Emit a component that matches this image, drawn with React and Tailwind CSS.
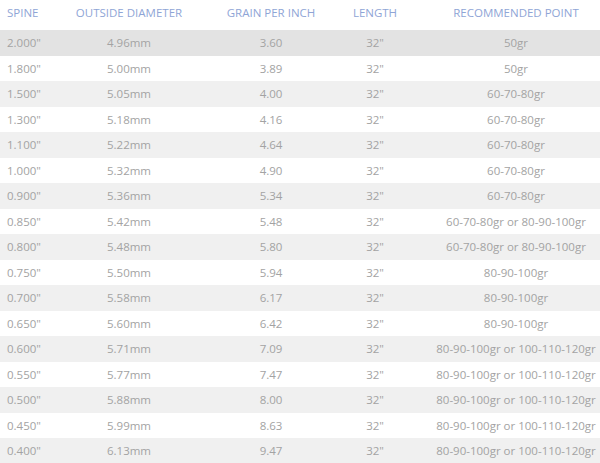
import React from "react";

const rows = [
    ["2.000\"", "4.96mm", "3.60", "32\"", "50gr"],
    ["1.800\"", "5.00mm", "3.89", "32\"", "50gr"],
    ["1.500\"", "5.05mm", "4.00", "32\"", "60-70-80gr"],
    ["1.300\"", "5.18mm", "4.16", "32\"", "60-70-80gr"],
    ["1.100\"", "5.22mm", "4.64", "32\"", "60-70-80gr"],
    ["1.000\"", "5.32mm", "4.90", "32\"", "60-70-80gr"],
    ["0.900\"", "5.36mm", "5.34", "32\"", "60-70-80gr"],
    ["0.850\"", "5.42mm", "5.48", "32\"", "60-70-80gr or 80-90-100gr"],
    ["0.800\"", "5.48mm", "5.80", "32\"", "60-70-80gr or 80-90-100gr"],
    ["0.750\"", "5.50mm", "5.94", "32\"", "80-90-100gr"],
    ["0.700\"", "5.58mm", "6.17", "32\"", "80-90-100gr"],
    ["0.650\"", "5.60mm", "6.42", "32\"", "80-90-100gr"],
    ["0.600\"", "5.71mm", "7.09", "32\"", "80-90-100gr or 100-110-120gr"],
    ["0.550\"", "5.77mm", "7.47", "32\"", "80-90-100gr or 100-110-120gr"],
    ["0.500\"", "5.88mm", "8.00", "32\"", "80-90-100gr or 100-110-120gr"],
    ["0.450\"", "5.99mm", "8.63", "32\"", "80-90-100gr or 100-110-120gr"],
    ["0.400\"", "6.13mm", "9.47", "32\"", "80-90-100gr or 100-110-120gr"],
];

const cols = "grid grid-cols-[60px_138px_146px_62px_194px]";

const App = () => {
    return (
        <div className="w-[600px] bg-white font-['Open_Sans',sans-serif] text-[11.5px]">
            {/* Header */}
            <div className={`${cols} h-[30px] items-start pt-[4px] text-[#8fa5d6] whitespace-nowrap`}>
                <div className="pl-[7px]">SPINE</div>
                <div className="text-center">OUTSIDE DIAMETER</div>
                <div className="text-center">GRAIN PER INCH</div>
                <div className="text-center">LENGTH</div>
                <div className="text-center pl-[26px]">RECOMMENDED POINT</div>
            </div>

            {/* Rows */}
            {rows.map((r, i) => (
                <div
                    key={r[0]}
                    className={`${cols} h-[25.5px] items-center text-[#a3a3a3] whitespace-nowrap ${
                        i === 0 ? "bg-[#e3e3e3]" : i % 2 === 0 ? "bg-[#f0f0f0]" : "bg-white"
                    }`}
                >
                    <div className="pl-[7px]">{r[0]}</div>
                    <div className="text-center">{r[1]}</div>
                    <div className="text-center">{r[2]}</div>
                    <div className="text-center">{r[3]}</div>
                    <div className="text-center pl-[26px]">{r[4]}</div>
                </div>
            ))}
        </div>
    );
};

export default App;
